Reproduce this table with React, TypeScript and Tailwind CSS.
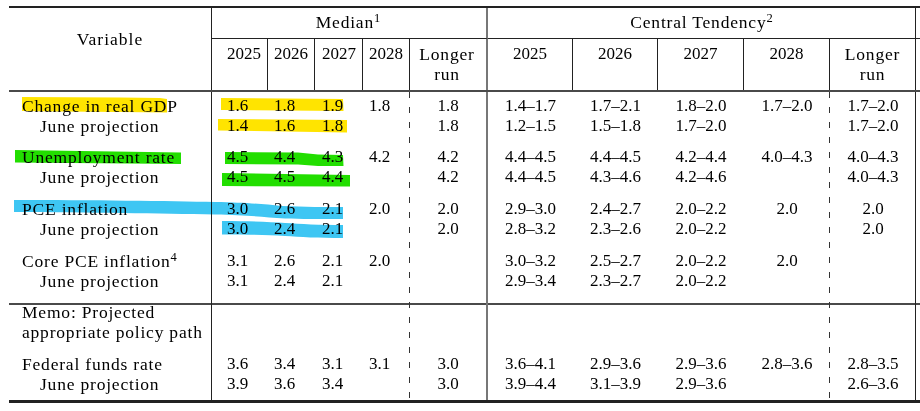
import React from "react";

const COLS =
  "grid grid-cols-[203px_56px_47px_48px_47px_78px_85px_85px_86px_86px_86px_1fr]";
const MED_PAD = ["pl-[15px]", "pl-[6px]", "pl-[7px]", "pl-[6px]"];
const DASH =
  "bg-[image:repeating-linear-gradient(to_bottom,#333_0px,#333_6px,transparent_6px,transparent_15px)] bg-[length:1px_100%] bg-[position:right_top] bg-no-repeat";

type Row = {
  kind: "row";
  label: React.ReactNode;
  indent?: boolean;
  med: string[];
  ct: string[];
};
type Spacer = { kind: "spacer"; h: string };

const J = "June projection";

const section1: (Row | Spacer)[] = [
  {
    kind: "row",
    label: "Change in real GDP",
    med: ["1.6", "1.8", "1.9", "1.8", "1.8"],
    ct: ["1.4–1.7", "1.7–2.1", "1.8–2.0", "1.7–2.0", "1.7–2.0"],
  },
  {
    kind: "row",
    label: J,
    indent: true,
    med: ["1.4", "1.6", "1.8", "", "1.8"],
    ct: ["1.2–1.5", "1.5–1.8", "1.7–2.0", "", "1.7–2.0"],
  },
  { kind: "spacer", h: "h-[11px]" },
  {
    kind: "row",
    label: "Unemployment rate",
    med: ["4.5", "4.4", "4.3", "4.2", "4.2"],
    ct: ["4.4–4.5", "4.4–4.5", "4.2–4.4", "4.0–4.3", "4.0–4.3"],
  },
  {
    kind: "row",
    label: J,
    indent: true,
    med: ["4.5", "4.5", "4.4", "", "4.2"],
    ct: ["4.4–4.5", "4.3–4.6", "4.2–4.6", "", "4.0–4.3"],
  },
  { kind: "spacer", h: "h-[12px]" },
  {
    kind: "row",
    label: "PCE inflation",
    med: ["3.0", "2.6", "2.1", "2.0", "2.0"],
    ct: ["2.9–3.0", "2.4–2.7", "2.0–2.2", "2.0", "2.0"],
  },
  {
    kind: "row",
    label: J,
    indent: true,
    med: ["3.0", "2.4", "2.1", "", "2.0"],
    ct: ["2.8–3.2", "2.3–2.6", "2.0–2.2", "", "2.0"],
  },
  { kind: "spacer", h: "h-[12px]" },
  {
    kind: "row",
    label: (
      <>
        Core PCE inflation<sup className="text-[12.5px] tracking-normal">4</sup>
      </>
    ),
    med: ["3.1", "2.6", "2.1", "2.0", ""],
    ct: ["3.0–3.2", "2.5–2.7", "2.0–2.2", "2.0", ""],
  },
  {
    kind: "row",
    label: J,
    indent: true,
    med: ["3.1", "2.4", "2.1", "", ""],
    ct: ["2.9–3.4", "2.3–2.7", "2.0–2.2", "", ""],
  },
  { kind: "spacer", h: "h-[12px]" },
];

const section2: Row[] = [
  {
    kind: "row",
    label: "Federal funds rate",
    med: ["3.6", "3.4", "3.1", "3.1", "3.0"],
    ct: ["3.6–4.1", "2.9–3.6", "2.9–3.6", "2.8–3.6", "2.8–3.5"],
  },
  {
    kind: "row",
    label: J,
    indent: true,
    med: ["3.9", "3.6", "3.4", "", "3.0"],
    ct: ["3.9–4.4", "3.1–3.9", "2.9–3.6", "", "2.6–3.6"],
  },
];

function DataRow({ r }: { r: Row }) {
  return (
    <div className={`${COLS} h-[20px] leading-[20px]`}>
      <div
        className={`${r.indent ? "pl-[31px]" : "pl-[13px]"} text-[17.5px] tracking-[0.8px] whitespace-nowrap`}
      >
        {r.label}
      </div>
      {r.med.slice(0, 4).map((v, i) => (
        <div key={i} className={`${MED_PAD[i]} text-[17px]`}>
          {v}
        </div>
      ))}
      <div className="text-center text-[17px] pr-[2px]">{r.med[4]}</div>
      {r.ct.map((v, i) => (
        <div key={i} className="text-center text-[17px] whitespace-nowrap">
          {v}
        </div>
      ))}
      <div />
    </div>
  );
}

function Header() {
  return (
    <div className={`${COLS} grid-rows-[31px_51px] border-b-2 border-[#4a4a4a] leading-[20px]`}>
      <div className="row-span-2 border-r border-[#222] text-center pt-[21px] text-[17.5px] tracking-[1px]">
        Variable
      </div>
      <div className="col-span-5 border-r-2 border-r-[#777] border-b border-b-[#222] text-center pt-[4px] pr-[2px] text-[17.5px] tracking-[0.8px]">
        Median<sup className="text-[12.5px] tracking-normal">1</sup>
      </div>
      <div className="col-span-5 border-r border-b border-[#222] text-center pt-[4px] text-[17.5px] tracking-[0.8px]">
        Central Tendency<sup className="text-[12.5px] tracking-normal">2</sup>
      </div>
      <div className="border-b border-[#222]" />

      <div className="border-r border-[#222] pl-[15px] pt-[5px] text-[17px]">2025</div>
      <div className="border-r border-[#222] pl-[6px] pt-[5px] text-[17px]">2026</div>
      <div className="border-r border-[#222] pl-[7px] pt-[5px] text-[17px]">2027</div>
      <div className="border-r border-[#222] pl-[6px] pt-[5px] text-[17px]">2028</div>
      <div className="border-r-2 border-[#777] text-center pt-[5px] pr-[2px] text-[17.5px] tracking-[0.8px]">
        Longer
        <br />
        run
      </div>
      <div className="border-r border-[#222] text-center pt-[5px] text-[17px]">2025</div>
      <div className="border-r border-[#222] text-center pt-[5px] text-[17px]">2026</div>
      <div className="border-r border-[#222] text-center pt-[5px] text-[17px]">2027</div>
      <div className="border-r border-[#222] text-center pt-[5px] text-[17px]">2028</div>
      <div className="border-r border-[#222] text-center pt-[5px] text-[17.5px] tracking-[0.8px]">
        Longer
        <br />
        run
      </div>
      <div />
    </div>
  );
}

function Highlights() {
  return (
    <svg
      className="absolute inset-0 pointer-events-none mix-blend-multiply"
      width="920"
      height="411"
      viewBox="0 0 920 411"
    >
      {/* yellow */}
      <g fill="#ffe400">
        <polygon points="22,97 120,97.5 160,98 167,99 167,112.5 120,112 60,111.5 22,111" />
        <polygon points="221,98 343,99 343.5,111 221,110" />
        <polygon points="218,119 347,120 347,132.5 218,130.5" />
      </g>
      {/* green */}
      <g fill="#22de00">
        <polygon points="15,150 181,152.5 181,164 15,162.5" />
        <polygon points="225,152 298,152.5 318,154.5 343,155 343.5,166 318,166 298,164.5 225,164" />
        <polygon points="222,173 350,175 350,186.5 222,186" />
      </g>
      {/* blue */}
      <g fill="#3ec6f3">
        <path d="M14,200 C90,200 170,201 215,202 C245,202.5 262,204 282,206 C305,207 325,207 343,207 L343,219 C320,219 300,219 285,218.5 C262,217 245,215 215,214.5 C160,213.5 90,212.5 14,212 Z" />
        <path d="M222,221 C250,221 270,222 285,223 C300,224 320,225 343,225 L343,238 C318,238 300,237 285,236 C268,235 250,234.5 222,234.5 Z" />
      </g>
    </svg>
  );
}

export default function App() {
  return (
    <div className="relative w-[920px] h-[411px] overflow-hidden bg-white text-[#000] font-['Liberation_Serif',serif]">
      <div className="ml-[9px] mt-[6px] w-[940px] border-t-2 border-b-[3px] border-[#222]">
        <Header />
        <div className="grid">
          <div className="col-start-1 row-start-1 flex flex-col">
            <div className="flex flex-col pt-[4px]">
              {section1.map((r, i) =>
                r.kind === "spacer" ? (
                  <div key={i} className={r.h} />
                ) : (
                  <DataRow key={i} r={r} />
                )
              )}
            </div>
            <div className="h-[2px] bg-[#4a4a4a]" />
            <div className="flex flex-col">
              <div className={`${COLS} h-[49px]`}>
                <div className="pl-[13px] -mt-[3px] leading-[20px] text-[17.5px] tracking-[0.8px] whitespace-nowrap">
                  Memo: Projected
                  <br />
                  appropriate policy path
                </div>
              </div>
              {section2.map((r, i) => (
                <DataRow key={i} r={r} />
              ))}
              <div className="h-[6px]" />
            </div>
          </div>
          <div className={`${COLS} col-start-1 row-start-1 pointer-events-none`}>
            <div className="border-r border-[#222]" />
            <div />
            <div />
            <div />
            <div className={DASH} />
            <div className="border-r-2 border-[#777]" />
            <div />
            <div />
            <div />
            <div className={DASH} />
            <div className="border-r border-[#222]" />
            <div />
          </div>
        </div>
      </div>
      <Highlights />
    </div>
  );
}
